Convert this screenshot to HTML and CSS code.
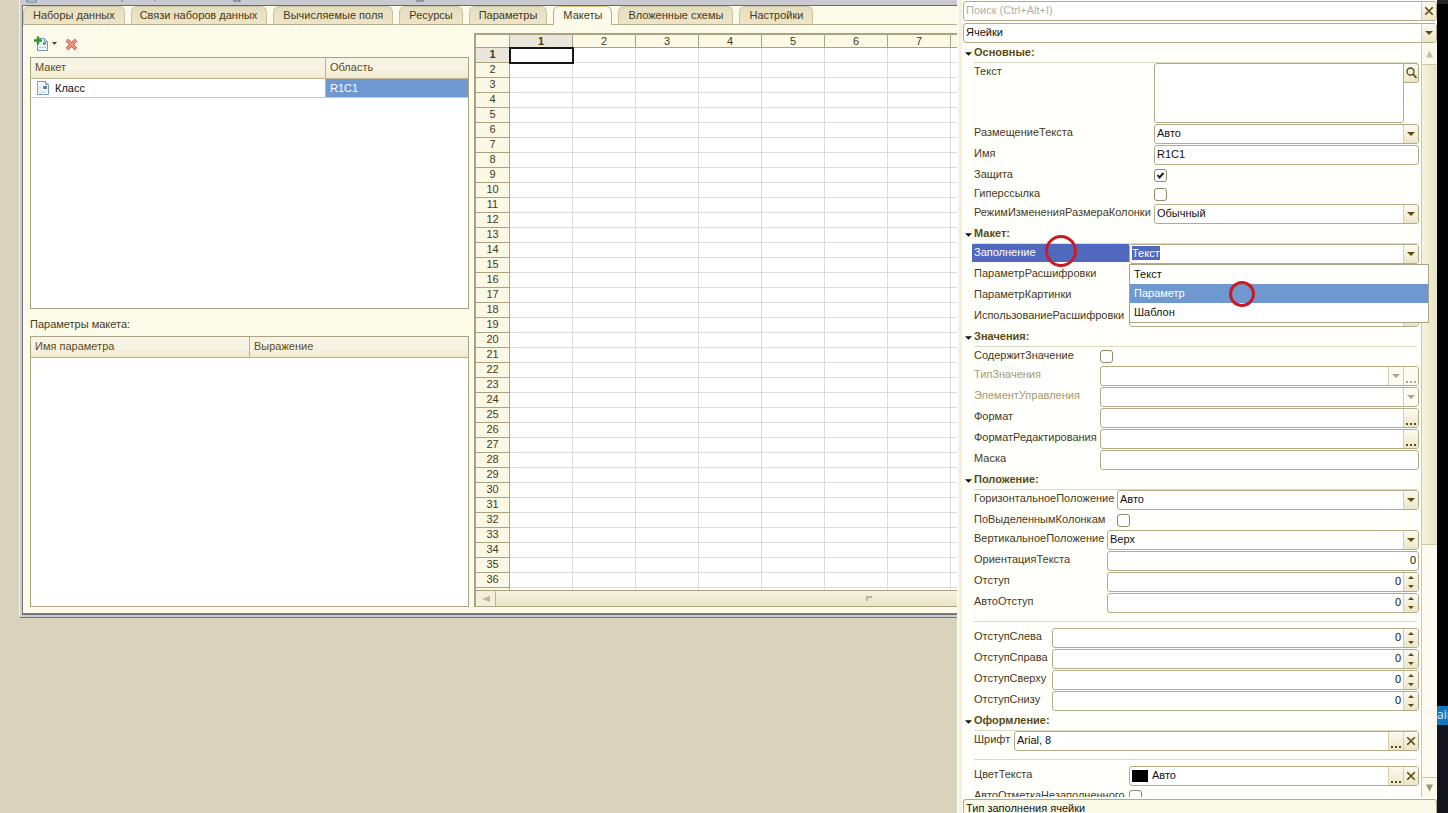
FILE: index.html
```html
<!DOCTYPE html>
<html lang="ru">
<head>
<meta charset="utf-8">
<title>Макеты</title>
<link rel="stylesheet" href="styles.css">
</head>
<body>
<svg class="defs" aria-hidden="true">
  <symbol id="down" viewBox="0 0 8 4"><path d="M0 0h8L4 4z" fill="currentColor"/></symbol>
  <symbol id="up" viewBox="0 0 8 8"><path d="M4 0l4 8H0z" fill="currentColor"/></symbol>
  <symbol id="cross" viewBox="0 0 8 8"><path d="M1 1l6 6M7 1l-6 6" stroke="currentColor" stroke-width="1.400"/></symbol>
  <symbol id="dots" viewBox="0 0 11 2"><path d="M0 0h2v2H0zM4 0h2v2H4zM8 0h2v2H8z" fill="currentColor"/></symbol>
  <symbol id="spin" viewBox="0 0 6 12"><path d="M0 3l3-3 3 3zM0 9h6l-3 3z" fill="currentColor"/></symbol>
  <symbol id="sheet" viewBox="0 0 14 14"><path d="M1.500.5h8l3 3v10h-11z" fill="#f4f9fd" stroke="#7d9cba"/><path d="M9.500.5v3h3" fill="#cfe0ee" stroke="#7d9cba"/><path d="M7 5h4v3H7z" fill="#5f7f9e"/><path d="M3 6h2M3 8h2M3 11h7" stroke="#bcd0e2"/></symbol>
</svg>
<div class="app">
  <main class="desktop">
    <section class="window">
      <header class="titlebar">
        <svg width="430" height="5" viewBox="0 0 430 5"><path d="M5 0v2h9V0z" fill="#f4f8fc" stroke="#5b7890"/><path d="M100 0v1.500M133 0v1M211 1h7M218 0v1.500M394 1h7M401 0v1.500" stroke="#5d6070" fill="none"/></svg>
      </header>
      <nav class="tabs">
        <button class="tab">Наборы данных</button>
        <button class="tab">Связи наборов данных</button>
        <button class="tab">Вычисляемые поля</button>
        <button class="tab">Ресурсы</button>
        <button class="tab">Параметры</button>
        <button class="tab active">Макеты</button>
        <button class="tab">Вложенные схемы</button>
        <button class="tab">Настройки</button>
      </nav>
      <div class="work">
        <div class="lists">
          <div class="toolbar">
            <button class="tool" aria-label="Добавить">
              <svg width="24" height="16" viewBox="0 0 24 16"><path d="M3.500 2.500h7l3 3v9h-10z" fill="#eef5fb" stroke="#7596b5"/><path d="M10.500 2.500v3h3" fill="#cfe0ee" stroke="#7596b5"/><path d="M9 6.500h3v2H9z" fill="#4f7193"/><path d="M5 11.500h7" stroke="#9db9d2" stroke-dasharray="2 1"/><path d="M0 4.500h8M4 .5v8" stroke="#2c9a1c" stroke-width="2.400"/><path d="M18 6h5l-2.500 3z" fill="#4a401c"/></svg>
            </button>
            <button class="tool" aria-label="Удалить">
              <svg width="13" height="13" viewBox="0 0 13 13"><path d="M2 2l9 9M11 2l-9 9" stroke="#cf4a3e" stroke-width="3.600"/><path d="M2 2l9 9M11 2l-9 9" stroke="#f3998c" stroke-width="1.800"/></svg>
            </button>
          </div>
          <div class="list first">
            <table>
              <colgroup><col class="wide"><col></colgroup>
              <thead><tr><th>Макет</th><th>Область</th></tr></thead>
              <tbody><tr><td><span class="name"><svg width="14" height="14"><use href="#sheet"/></svg>Класс</span></td><td class="picked">R1C1</td></tr></tbody>
            </table>
          </div>
          <p class="caption">Параметры макета:</p>
          <div class="list second">
            <table>
              <colgroup><col class="half"><col></colgroup>
              <thead><tr><th>Имя параметра</th><th>Выражение</th></tr></thead>
            </table>
          </div>
        </div>
        <div class="sheet">
          <div class="grid"><table id="cells"></table></div>
          <div class="hscroll">
            <button class="left" aria-label="Влево"><svg width="8" height="6" viewBox="0 0 8 6"><path d="M8 0v6L0 3z" fill="#b9b5a4"/></svg></button>
            <div class="hthumb"><svg width="6" height="5" viewBox="0 0 6 5"><path d="M1 5V1h5" stroke="#b9b5a0" stroke-width="2" fill="none"/></svg></div>
          </div>
        </div>
      </div>
    </section>
  </main>

  <aside class="panel">
    <div class="field top"><input type="text" aria-label="Поиск" placeholder="Поиск (Ctrl+Alt+I)"><button aria-label="Очистить"><svg width="10" height="10"><use href="#cross"/></svg></button></div>
    <div class="field top"><select aria-label="Объект"><option>Ячейки</option></select><button aria-label="Выбрать"><svg width="8" height="4"><use href="#down"/></svg></button></div>
    <div class="body">
      <div class="props">
        <button class="section"><svg width="7" height="4"><use href="#down"/></svg><span>Основные:</span></button>
        <div class="group g-main">
          <label for="f1">Текст</label>
          <div class="memo"><textarea id="f1"></textarea><button aria-label="Открыть"><svg width="11" height="12" viewBox="0 0 11 12"><circle cx="4.500" cy="4.500" r="3.500" fill="none" stroke="#55471c" stroke-width="1.300"/><path d="M7 7l3.500 4" stroke="#55471c" stroke-width="1.800"/></svg></button></div>
          <label for="f2">РазмещениеТекста</label>
          <div class="field"><select id="f2"><option>Авто</option></select><button aria-label="Выбрать"><svg width="8" height="4"><use href="#down"/></svg></button></div>
          <label for="f3">Имя</label>
          <div class="field"><input id="f3" type="text" value="R1C1"></div>
          <label for="f4">Защита</label>
          <div class="tick"><input id="f4" type="checkbox" checked></div>
          <label for="f5">Гиперссылка</label>
          <div class="tick"><input id="f5" type="checkbox"></div>
          <label for="f6">РежимИзмененияРазмераКолонки</label>
          <div class="field"><select id="f6"><option>Обычный</option></select><button aria-label="Выбрать"><svg width="8" height="4"><use href="#down"/></svg></button></div>
        </div>

        <button class="section"><svg width="7" height="4"><use href="#down"/></svg><span>Макет:</span></button>
        <div class="group g-layout">
          <label for="f7" class="current">Заполнение<svg class="mark large" viewBox="0 0 34 34"><circle cx="17" cy="17" r="14.500"/></svg></label>
          <div class="field combo"><input id="f7" class="marked" type="text" value="Текст"><span class="space"></span><button aria-label="Выбрать"><svg width="8" height="4"><use href="#down"/></svg></button>
            <ul class="menu" role="listbox">
              <li role="option">Текст</li>
              <li role="option" class="hover" aria-selected="true">Параметр<svg class="mark small" viewBox="0 0 28 28"><circle cx="14" cy="14" r="11.500"/></svg></li>
              <li role="option">Шаблон</li>
            </ul>
          </div>
          <label for="f8">ПараметрРасшифровки</label>
          <div class="field"><input id="f8" type="text"></div>
          <label for="f9">ПараметрКартинки</label>
          <div class="field"><input id="f9" type="text"></div>
          <label for="f10">ИспользованиеРасшифровки</label>
          <div class="field"><select id="f10"><option></option></select><button aria-label="Выбрать"><svg width="8" height="4"><use href="#down"/></svg></button></div>
        </div>

        <button class="section"><svg width="7" height="4"><use href="#down"/></svg><span>Значения:</span></button>
        <div class="group g-values">
          <label for="f11">СодержитЗначение</label>
          <div class="tick"><input id="f11" type="checkbox"></div>
          <label for="f12" class="off">ТипЗначения</label>
          <div class="field off"><input id="f12" type="text" disabled><button disabled aria-label="Выбрать"><svg width="8" height="4"><use href="#down"/></svg></button><button disabled class="low" aria-label="Ещё"><svg width="11" height="2"><use href="#dots"/></svg></button></div>
          <label for="f13" class="off">ЭлементУправления</label>
          <div class="field off"><input id="f13" type="text" disabled><button disabled aria-label="Выбрать"><svg width="8" height="4"><use href="#down"/></svg></button></div>
          <label for="f14">Формат</label>
          <div class="field"><input id="f14" type="text"><button class="low" aria-label="Ещё"><svg width="11" height="2"><use href="#dots"/></svg></button></div>
          <label for="f15">ФорматРедактирования</label>
          <div class="field"><input id="f15" type="text"><button class="low" aria-label="Ещё"><svg width="11" height="2"><use href="#dots"/></svg></button></div>
          <label for="f16">Маска</label>
          <div class="field"><input id="f16" type="text"></div>
        </div>

        <button class="section"><svg width="7" height="4"><use href="#down"/></svg><span>Положение:</span></button>
        <div class="group g-horizontal">
          <label for="f17">ГоризонтальноеПоложение</label>
          <div class="field"><select id="f17"><option>Авто</option></select><button aria-label="Выбрать"><svg width="8" height="4"><use href="#down"/></svg></button></div>
          <label for="f18">ПоВыделеннымКолонкам</label>
          <div class="tick"><input id="f18" type="checkbox"></div>
        </div>
        <div class="group g-vertical">
          <label for="f19">ВертикальноеПоложение</label>
          <div class="field"><select id="f19"><option>Верх</option></select><button aria-label="Выбрать"><svg width="8" height="4"><use href="#down"/></svg></button></div>
          <label for="f20">ОриентацияТекста</label>
          <div class="field"><input id="f20" class="num" type="text" value="0"></div>
          <label for="f21">Отступ</label>
          <div class="field"><input id="f21" class="num" type="text" value="0"><button aria-label="Изменить"><svg width="6" height="12"><use href="#spin"/></svg></button></div>
          <label for="f22">АвтоОтступ</label>
          <div class="field"><input id="f22" class="num" type="text" value="0"><button aria-label="Изменить"><svg width="6" height="12"><use href="#spin"/></svg></button></div>
        </div>
        <hr>
        <div class="group g-indent">
          <label for="f23">ОтступСлева</label>
          <div class="field"><input id="f23" class="num" type="text" value="0"><button aria-label="Изменить"><svg width="6" height="12"><use href="#spin"/></svg></button></div>
          <label for="f24">ОтступСправа</label>
          <div class="field"><input id="f24" class="num" type="text" value="0"><button aria-label="Изменить"><svg width="6" height="12"><use href="#spin"/></svg></button></div>
          <label for="f25">ОтступСверху</label>
          <div class="field"><input id="f25" class="num" type="text" value="0"><button aria-label="Изменить"><svg width="6" height="12"><use href="#spin"/></svg></button></div>
          <label for="f26">ОтступСнизу</label>
          <div class="field"><input id="f26" class="num" type="text" value="0"><button aria-label="Изменить"><svg width="6" height="12"><use href="#spin"/></svg></button></div>
        </div>

        <button class="section"><svg width="7" height="4"><use href="#down"/></svg><span>Оформление:</span></button>
        <div class="group g-font">
          <label for="f27">Шрифт</label>
          <div class="field"><input id="f27" type="text" value="Arial, 8"><button class="low" aria-label="Ещё"><svg width="11" height="2"><use href="#dots"/></svg></button><button aria-label="Очистить"><svg width="10" height="10"><use href="#cross"/></svg></button></div>
        </div>
        <hr>
        <div class="group g-layout">
          <label for="f28">ЦветТекста</label>
          <div class="field"><span class="swatch"></span><input id="f28" type="text" value="Авто"><button class="low" aria-label="Ещё"><svg width="11" height="2"><use href="#dots"/></svg></button><button aria-label="Очистить"><svg width="10" height="10"><use href="#cross"/></svg></button></div>
          <label for="f29">АвтоОтметкаНезаполненного</label>
          <div class="tick"><input id="f29" type="checkbox"></div>
        </div>
      </div>
      <div class="vscroll">
        <button class="end" aria-label="Вверх"><svg width="7" height="8"><use href="#up"/></svg></button>
        <div class="vthumb"></div>
        <div class="vtrack"></div>
        <button class="end" aria-label="Вниз"><svg class="flip" width="7" height="8"><use href="#up"/></svg></button>
      </div>
    </div>
    <div class="hint">Тип заполнения ячейки</div>
  </aside>
  <div class="strip"><div class="dark"></div><div class="badge">ain</div><div class="navy"></div></div>
</div>
<script src="cells.js"></script>
</body>
</html>
```
FILE: cells.js
```js
const table = document.getElementById('cells');
const COLUMNS = 8;
const ROWS = 37;
const LABELLED_COLUMNS = 7;
const LABELLED_ROWS = 36;

const group = document.createElement('colgroup');
for (let c = 0; c <= COLUMNS; c++) {
  group.appendChild(document.createElement('col')).className = c ? 'data' : 'rownum';
}
table.appendChild(group);

for (let r = 0; r <= ROWS; r++) {
  const row = table.insertRow();
  for (let c = 0; c <= COLUMNS; c++) {
    const cell = document.createElement(r && c ? 'td' : 'th');
    if (r === 0 && c > 0 && c <= LABELLED_COLUMNS) cell.textContent = c;
    if (c === 0 && r > 0 && r <= LABELLED_ROWS) cell.textContent = r;
    if ((r === 0 && c === 1) || (c === 0 && r === 1)) cell.className = 'on';
    if (r === 1 && c === 1) cell.className = 'cursor';
    row.appendChild(cell);
  }
}
```
FILE: styles.css
```css
* { box-sizing: border-box; }

body {
  margin: 0;
  height: 100vh;
  overflow: hidden;
  background: #d9d3be;
  color: #463a1a;
  font: 11px/16px "Liberation Sans", Arial, sans-serif;
}

button, input, select, textarea {
  margin: 0;
  padding: 0;
  border: 0;
  border-radius: 0;
  outline: 0;
  background: none;
  color: inherit;
  font: inherit;
  appearance: none;
}

svg { display: block; flex: none; }
.defs { position: absolute; width: 0; height: 0; }

.app { display: flex; height: 100vh; }
.desktop { flex: 1; min-width: 0; padding-left: 19px; }

/* designer window */
.window {
  height: 618px;
  display: flex;
  flex-direction: column;
  border-left: 1px solid #f3f1e6;
  border-bottom: 1px solid #77777a;
  background: #c9cad0;
  padding: 0 0 2px 2px;
}
.titlebar { height: 5px; flex: none; }

.tabs {
  display: flex;
  gap: 6px;
  height: 20px;
  flex: none;
  background: #fcfbea;
  border-top: 1px solid #6c6a5c;
  border-left: 1px solid #76767a;
  box-shadow: inset 0 -1px #b5ae8e;
}
.tab {
  height: 19px;
  padding: 0 9px 1px 8px;
  border: 1px solid #c9c3a2;
  border-bottom-color: #b5ae8e;
  border-radius: 6px 6px 0 0;
  background: linear-gradient(#e4dfc0, #efe4c8);
  white-space: nowrap;
}
.tab:first-child { padding-left: 9px; }
.tab:nth-child(n+3) { padding-left: 9px; }
.tab.active {
  padding-bottom: 2px;
  background: #fcfbea;
  border-color: #b5ae8e;
  border-top-color: #d8c67c;
  border-bottom: 0;
}

.work {
  flex: 1;
  min-height: 0;
  display: grid;
  grid-template-columns: 439px minmax(0, 1fr);
  gap: 5px;
  padding: 8px 0 6px 7px;
  background: #fcfbea;
  border-left: 1px solid #76767a;
  border-bottom: 2px solid #77777a;
}
.lists { display: flex; flex-direction: column; min-height: 0; }
.toolbar { display: flex; align-items: center; gap: 7px; height: 24px; padding: 0 3px 2px 4px; }

.list { background: #fff; border: 1px solid #a9a384; }
.first { flex: 252; }
.second { flex: 271; }
.caption { margin: 0; padding: 7px 0 4px; }

table { width: 100%; table-layout: fixed; border-collapse: separate; border-spacing: 0; }
.list col.wide { width: 294px; }
.list col.half { width: 218px; }
.list th {
  height: 21px;
  padding: 0 4px 2px;
  text-align: left;
  font-weight: normal;
  color: #5f4c12;
  background: linear-gradient(#f7f4e6 50%, #f1e9cb);
  border-bottom: 1px solid #bab491;
  line-height: 18px;
}
.list th + th { border-left: 1px solid #bab491; }
.list td { height: 19px; padding: 0 4px; line-height: 18px; color: #111; border-bottom: 1px solid #b4d0dc; }
.list td.picked { background: #6f98d0; color: #fff; border-left: 1px solid #9fb8dc; }
.name { display: flex; align-items: center; gap: 5px; padding-left: 1px; }

/* spreadsheet */
.sheet {
  display: flex;
  flex-direction: column;
  min-height: 0;
  border: solid #aaa37f;
  border-width: 2px 0 1px 2px;
  background: #fff;
}
.grid { flex: 1; min-height: 0; overflow: hidden; }
#cells { width: 538px; }
#cells .rownum { width: 34px; }
#cells .data { width: 63px; }
#cells th, #cells td { height: 15px; padding: 0; line-height: 12px; vertical-align: top; border: solid #dcdce0; border-width: 0 1px 1px 0; }
#cells th { font-weight: normal; text-align: center; background: #fbf9e6; border-color: #aaa37f; }
#cells tr:first-child th { height: 13px; }
#cells th.on { font-weight: bold; background: #e9e6db; }
#cells .cursor { position: relative; }
#cells .cursor::after { content: ""; position: absolute; inset: -1px -2px -2px -1px; border: 2px solid #15151c; }

.hscroll { display: flex; height: 16px; flex: none; border-top: 1px solid #aaa37f; }
.hscroll .left { width: 20px; display: grid; place-items: center; background: #f3eed8; border-right: 1px solid #bab491; }
.hthumb { flex: 1; display: grid; align-items: center; padding-left: 77%; background: linear-gradient(#f5f2df, #ebe5c2); }

/* property panel */
.panel {
  flex: none;
  width: 480px;
  height: 100vh;
  display: flex;
  flex-direction: column;
  padding: 1px 0 0 4px;
  background: #fffffb;
  border-left: 2px solid #fcfbf0;
  box-shadow: inset 3px 0 #f4f0dc;
}
.field {
  display: flex;
  position: relative;
  height: 20px;
  margin-bottom: 1px;
  border: 1px solid #b3ac87;
  border-radius: 3px;
  background: #fff;
  color: #111;
}
.field.top { flex: none; margin-bottom: 2px; }
.field.top + .field.top { margin-bottom: 1px; }
.field > input, .field > select { flex: 1; min-width: 0; padding: 0 2px 2px; }
.field > .num { text-align: right; }
.field > button, .memo > button {
  flex: none;
  width: 15px;
  display: grid;
  place-items: center;
  border-left: 1px solid #d5cfae;
  background: linear-gradient(#fcfaf0, #ece6c9);
  color: #5f4c12;
  border-radius: 0 2px 2px 0;
}
.field > button.low { align-items: end; padding-bottom: 2px; }
.field.off > button { color: #aaa58e; background: #fcfaf1; }
input::placeholder { color: #b0b0a8; opacity: 1; }

.body { flex: 1; min-height: 0; display: flex; overflow: hidden; margin-bottom: 2px; }
.props { flex: 1; min-width: 0; padding-right: 2px; }
.section {
  display: flex;
  align-items: center;
  gap: 3px;
  width: 100%;
  height: 19px;
  padding-left: 2px;
  font-weight: bold;
  color: #5b4a14;
  text-align: left;
}
.section svg { color: #111; }
.section span { flex: 1; height: 19px; line-height: 16px; margin: 0 2px 0 -1px; border-bottom: 1px solid #dcd8c2; }
.group { display: grid; column-gap: 3px; padding-left: 11px; align-items: start; }
.g-main { grid-template-columns: 177px 1fr; }
.g-layout { grid-template-columns: 152px 1fr; }
.g-values { grid-template-columns: 123px 1fr; }
.g-horizontal { grid-template-columns: 140px 1fr; }
.g-vertical { grid-template-columns: 130px 1fr; }
.g-indent { grid-template-columns: 75px 1fr; }
.g-font { grid-template-columns: 37px 1fr; }
label { white-space: nowrap; }
label.off { color: #a39a72; }
.props hr { height: 1px; margin: 7px 2px 6px 11px; border: 0; background: #dcd8c2; }

.memo { display: flex; align-items: flex-start; height: 61px; }
.memo textarea { flex: 1; min-width: 0; height: 60px; resize: none; background: #fff; border: 1px solid #b3ac87; border-radius: 3px 0 3px 3px; }
.memo > button { height: 20px; border: 1px solid #b3ac87; border-left: 0; border-radius: 0 3px 3px 0; }

.tick { height: 19px; padding-top: 3px; }
.tick input { display: block; width: 13px; height: 13px; border: 1px solid #928b69; border-radius: 3px; background: #fff; }
.tick input:checked {
  background: #fff url("data:image/svg+xml,%3Csvg xmlns='http://www.w3.org/2000/svg' viewBox='0 0 11 11'%3E%3Cpath d='M2.500 5l2 2.500L8.500 3' fill='none' stroke='%23222222' stroke-width='2'/%3E%3C/svg%3E");
}

.current {
  position: relative;
  height: 18px;
  margin: 0 -3px 0 -2px;
  padding-left: 2px;
  background: #5069bf;
  color: #fff;
}
.combo { z-index: 1; }
.field > .marked { flex: none; width: 28px; height: 14px; margin: 1px 0 0 2px; padding: 0; background: #5069bf; color: #fff; }
.space { flex: 1; }
.menu {
  position: absolute;
  top: 19px;
  left: -1px;
  right: -11px;
  margin: 0;
  padding: 0;
  list-style: none;
  background: #fff;
  border: 1px solid #a9a384;
}
.menu li { position: relative; height: 19px; padding-left: 4px; line-height: 18px; }
.menu .hover { background: #6f98d0; color: #fff; }
.mark { position: absolute; fill: none; stroke: #cb1a24; z-index: 2; }
.large { width: 34px; height: 34px; left: 72px; top: -10px; stroke-width: 3; }
.small { width: 28px; height: 28px; left: 98px; top: -4px; stroke-width: 3; }

.swatch { width: 16px; height: 12px; margin: 3px 2px 0 2px; background: #000; }

.vscroll { flex: none; width: 16px; display: flex; flex-direction: column; border-left: 1px solid #cfc9a8; background: #fdfbf1; }
.end { flex: none; height: 20px; display: grid; place-items: center; background: #fbf8ea; color: #c4bfae; }
.end:last-child { color: #9b957c; border-top: 1px solid #cfc9a8; }
.flip { transform: rotate(180deg); }
.vthumb { flex: 480; border: solid #cfc9a8; border-width: 1px 0; background: linear-gradient(90deg, #f6f3df, #e8e3c0); }
.vtrack { flex: 233; }

.hint { flex: none; height: 14px; padding-left: 2px; background: #fbfae6; border: 1px solid #b3ac87; border-bottom: 0; border-radius: 3px 3px 0 0; color: #111; white-space: nowrap; overflow: hidden; }

/* edge of the window behind */
.strip { flex: none; width: 11px; display: flex; flex-direction: column; overflow: hidden; background: #000; border-top: 4px solid #25252a; }
.dark { flex: 702; }
.badge { height: 19px; background: #1576bb; color: #e4eef8; font: 12px/18px "Open Sans", sans-serif; }
.navy { flex: 88; background: #14141f; }
```
